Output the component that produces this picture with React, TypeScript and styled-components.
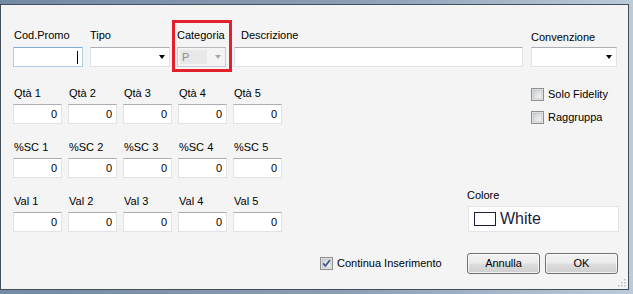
import React from 'react';
import styled, { createGlobalStyle } from 'styled-components';

const GlobalStyle = createGlobalStyle`
  html, body {
    margin: 0;
    padding: 0;
    background: #f4f4f4;
  }
  body {
    font-family: "Liberation Sans", Arial, sans-serif;
    font-size: 11px;
    color: #000;
  }
`;

// window frame around the dialog
const Frame = styled.div`
  width: 633px;
  height: 294px;
  box-sizing: border-box;
  padding: 4px 4px 4px 0;
  background: linear-gradient(90deg, #7489a3 0%, #8a9eb5 55%, #bccbda 100%);
`;

const Panel = styled.div`
  position: relative;
  height: 100%;
  box-sizing: border-box;
  border: 1px solid #434e5b;
  background: #f4f4f4;
  display: flex;
  flex-direction: column;
`;

const TopRow = styled.div`
  display: flex;
  align-items: flex-start;
  margin-top: 15px;
  padding-left: 12px;
`;

const Field = styled.div<{ $w: number; $ml?: number }>`
  display: flex;
  flex-direction: column;
  gap: 5px;
  width: ${(p) => p.$w}px;
  margin-left: ${(p) => p.$ml ?? 0}px;
  margin-top: 9px;
`;

const Label = styled.span<{ $pl?: number; $drop?: number }>`
  line-height: 13px;
  height: 13px;
  white-space: nowrap;
  padding-left: ${(p) => p.$pl ?? 1}px;
  position: relative;
  top: ${(p) => p.$drop ?? 0}px;
`;

const Highlight = styled.div`
  border: 3px solid #e3202c;
  padding: 6px 3px 2px 2px;
  margin-left: 2px;
  display: flex;
  flex-direction: column;
  gap: 5px;
  width: 60px;
  box-sizing: border-box;
`;

const TextBox = styled.div<{ $align?: 'left' | 'right'; $focus?: boolean }>`
  height: 20px;
  box-sizing: border-box;
  background: #fff;
  border: 1px solid ${(p) => (p.$focus ? '#b3cde6' : '#dfe2e6')};
  border-top-color: ${(p) => (p.$focus ? '#7eaed9' : '#abadb3')};
  display: flex;
  align-items: center;
  justify-content: ${(p) => (p.$align === 'right' ? 'flex-end' : 'flex-start')};
  padding: 0 4px 0 3px;
  line-height: 13px;
`;

const Caret = styled.span`
  width: 1px;
  height: 13px;
  background: #000;
`;

const Combo = styled.div<{ $disabled?: boolean }>`
  height: 20px;
  box-sizing: border-box;
  background: ${(p) => (p.$disabled ? '#f4f4f4' : '#fff')};
  border: 1px solid ${(p) => (p.$disabled ? '#c9cbcf' : '#dfe2e6')};
  border-top-color: ${(p) => (p.$disabled ? '#b5b8bd' : '#abadb3')};
  display: flex;
  align-items: center;
  padding: 0 3px 0 2px;
`;

const ComboValue = styled.span<{ $disabled?: boolean }>`
  flex: 1;
  height: 14px;
  line-height: 14px;
  padding-left: 2px;
  margin-right: 8px;
  color: ${(p) => (p.$disabled ? '#8a8a8a' : '#000')};
  background: ${(p) => (p.$disabled ? '#e8e8e8' : 'transparent')};
`;

const Arrow = styled.span<{ $disabled?: boolean }>`
  width: 0;
  height: 0;
  border-left: 3.5px solid transparent;
  border-right: 3.5px solid transparent;
  border-top: 4px solid ${(p) => (p.$disabled ? '#a9a9a9' : '#000')};
  margin-right: 1px;
`;

const Body = styled.div`
  display: flex;
  margin-top: 15px;
  padding-left: 12px;
  padding-right: 9px;
`;

const ValueGrid = styled.div`
  display: grid;
  grid-template-columns: repeat(5, 49px);
  column-gap: 6px;
  row-gap: 17px;
`;

const Cell = styled.div`
  display: flex;
  flex-direction: column;
  gap: 4px;
`;

const RightPane = styled.div`
  margin-left: auto;
  width: 152px;
  display: flex;
  flex-direction: column;
  justify-content: space-between;
  padding-top: 1px;
`;

const Options = styled.div`
  display: flex;
  flex-direction: column;
  gap: 10px;
  padding-left: 64px;
`;

const CheckRow = styled.label`
  display: flex;
  align-items: center;
  gap: 4px;
  line-height: 13px;
  white-space: nowrap;
`;

const ColorGroup = styled.div`
  display: flex;
  flex-direction: column;
  gap: 4px;
`;

const ColorBox = styled.div`
  height: 26px;
  box-sizing: border-box;
  margin-left: 1px;
  background: #fff;
  border: 1px solid #e3e5e8;
  display: flex;
  align-items: center;
  gap: 4px;
  padding-left: 5px;
`;

const Swatch = styled.span`
  width: 22px;
  height: 14px;
  box-sizing: border-box;
  border: 1px solid #1e1e3c;
  background: #fff;
`;

const ColorName = styled.span`
  font-size: 16px;
  line-height: 18px;
  color: #1c1c3a;
`;

const Footer = styled.div`
  display: flex;
  align-items: center;
  margin-top: 21px;
  padding-left: 319px;
  padding-right: 10px;
`;

const Buttons = styled.div`
  margin-left: auto;
  display: flex;
  gap: 5px;
`;

const Button = styled.button<{ $w: number }>`
  width: ${(p) => p.$w}px;
  height: 21px;
  box-sizing: border-box;
  border: 1px solid #707070;
  border-radius: 3px;
  background: linear-gradient(180deg, #f2f2f2 0%, #ebebeb 48%, #dddddd 52%, #cfcfcf 100%);
  box-shadow: inset 0 0 0 1px rgba(255, 255, 255, 0.7);
  font-family: "Liberation Sans", Arial, sans-serif;
  font-size: 11px;
  color: #000;
  padding: 0 0 2px;
`;

const Grip = styled.div`
  position: absolute;
  right: 1px;
  bottom: 1px;
  width: 10px;
  height: 10px;
`;

function CheckBox({ checked }: { checked?: boolean }) {
  const id = checked ? 'cbOn' : 'cbOff';
  return (
    <svg width="13" height="13" viewBox="0 0 13 13">
      <defs>
        <linearGradient id={id} x1="0" y1="0" x2="1" y2="1">
          <stop offset="0" stopColor="#cbcfd5" />
          <stop offset="1" stopColor="#f7f7f7" />
        </linearGradient>
      </defs>
      <rect x="0.5" y="0.5" width="12" height="12" fill="#f4f4f4" stroke="#8e8f8f" />
      <rect x="2" y="2" width="9" height="9" fill={`url(#${id})`} stroke="#a8abb0" strokeWidth="0.6" />
      {checked && (
        <path d="M3.2 6.4 L5.4 9 L9.8 3.2" fill="none" stroke="#3d528c" strokeWidth="1.7" />
      )}
    </svg>
  );
}

const rows = ['Qtà', '%SC', 'Val'];

export default function App() {
  return (
    <>
      <GlobalStyle />
      <Frame>
        <Panel>
          <TopRow>
            <Field $w={70}>
              <Label>Cod.Promo</Label>
              <TextBox $align="right" $focus>
                <Caret />
              </TextBox>
            </Field>
            <Field $w={80} $ml={7}>
              <Label $pl={0}>Tipo</Label>
              <Combo>
                <ComboValue />
                <Arrow />
              </Combo>
            </Field>
            <Highlight>
              <Label $pl={0}>Categoria</Label>
              <Combo $disabled>
                <ComboValue $disabled>P</ComboValue>
                <Arrow $disabled />
              </Combo>
            </Highlight>
            <Field $w={289} $ml={2}>
              <Label $pl={7}>Descrizione</Label>
              <TextBox />
            </Field>
            <Field $w={86} $ml={8}>
              <Label $pl={0} $drop={2}>Convenzione</Label>
              <Combo>
                <ComboValue />
                <Arrow />
              </Combo>
            </Field>
          </TopRow>

          <Body>
            <ValueGrid>
              {rows.map((r) =>
                [1, 2, 3, 4, 5].map((n) => (
                  <Cell key={r + n}>
                    <Label>
                      {r} {n}
                    </Label>
                    <TextBox $align="right">0</TextBox>
                  </Cell>
                ))
              )}
            </ValueGrid>
            <RightPane>
              <Options>
                <CheckRow>
                  <CheckBox />
                  Solo Fidelity
                </CheckRow>
                <CheckRow>
                  <CheckBox />
                  Raggruppa
                </CheckRow>
              </Options>
              <ColorGroup>
                <Label $pl={0}>Colore</Label>
                <ColorBox>
                  <Swatch />
                  <ColorName>White</ColorName>
                </ColorBox>
              </ColorGroup>
            </RightPane>
          </Body>

          <Footer>
            <CheckRow>
              <CheckBox checked />
              Continua Inserimento
            </CheckRow>
            <Buttons>
              <Button $w={73}>Annulla</Button>
              <Button $w={73}>OK</Button>
            </Buttons>
          </Footer>

          <Grip>
            <svg width="10" height="10" viewBox="0 0 10 10">
              {[
                [7, 1], [4, 4], [7, 4], [1, 7], [4, 7], [7, 7],
              ].map(([x, y]) => (
                <rect key={`${x}-${y}`} x={x} y={y} width="1.5" height="1.5" fill="#b7bcc2" />
              ))}
            </svg>
          </Grip>
        </Panel>
      </Frame>
    </>
  );
}
